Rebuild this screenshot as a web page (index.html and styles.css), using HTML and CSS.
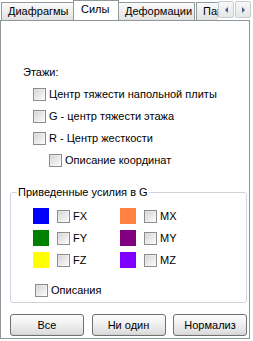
FILE: index.html
```html
<!DOCTYPE html>
<html>
<head>
<meta charset="utf-8">
<link rel="stylesheet" href="styles.css">
</head>
<body>
<div class="tabbar">
  <div class="tabs">
    <div class="tab t1">Диафрагмы</div>
    <div class="tab sel">Силы</div>
    <div class="tab t3">Деформации</div>
    <div class="tab t4">Параметры</div>
  </div>
  <div class="scroll">
    <div class="sbtn"><span class="arr left"></span></div>
    <div class="sbtn"><span class="arr right"></span></div>
  </div>
</div>
<div class="panel">
  <div class="floors">
    <div class="title">Этажи:</div>
    <label class="row ind1"><span class="cb"></span><span class="lbl">Центр тяжести напольной плиты</span></label>
    <label class="row ind1"><span class="cb"></span><span class="lbl">G - центр тяжести этажа</span></label>
    <label class="row ind1"><span class="cb"></span><span class="lbl">R - Центр жесткости</span></label>
    <label class="row ind2"><span class="cb"></span><span class="lbl">Описание координат</span></label>
  </div>
  <fieldset class="group">
    <legend>Приведенные усилия в G</legend>
    <div class="grid">
      <div class="row crow"><span class="sw" style="background:#0000ff"></span><span class="cb"></span><span class="lbl">FX</span></div>
      <div class="row crow"><span class="sw" style="background:#ff8040"></span><span class="cb"></span><span class="lbl">MX</span></div>
      <div class="row crow"><span class="sw" style="background:#008000"></span><span class="cb"></span><span class="lbl">FY</span></div>
      <div class="row crow"><span class="sw" style="background:#800080"></span><span class="cb"></span><span class="lbl">MY</span></div>
      <div class="row crow"><span class="sw" style="background:#ffff00"></span><span class="cb"></span><span class="lbl">FZ</span></div>
      <div class="row crow"><span class="sw" style="background:#8000ff"></span><span class="cb"></span><span class="lbl">MZ</span></div>
    </div>
    <label class="row desc"><span class="cb"></span><span class="lbl">Описания</span></label>
  </fieldset>
  <div class="buttons">
    <button class="btn">Все</button>
    <button class="btn">Ни один</button>
    <button class="btn">Нормализ</button>
  </div>
</div>
</body>
</html>
```
FILE: styles.css
```css
html, body {
  margin: 0;
  padding: 0;
  background: #ffffff;
}
body {
  width: 253px;
  height: 341px;
  overflow: hidden;
  font-family: "Liberation Sans", Arial, sans-serif;
  font-size: 11px;
  line-height: 13px;
  color: #000000;
}
.tabbar {
  display: flex;
  height: 20px;
}
.tabs {
  width: 218px;
  overflow: hidden;
  display: flex;
  align-items: flex-start;
  padding-left: 1px;
  box-sizing: border-box;
}
.tab {
  box-sizing: border-box;
  flex: none;
  height: 18px;
  margin-top: 2px;
  border: 1px solid #919b9c;
  border-bottom: none;
  background: linear-gradient(#fafafa, #ececec 60%, #e2e2e2);
  padding: 2px 0 0 6px;
  white-space: nowrap;
}
.t1 { width: 73px; }
.t3 { width: 77px; margin-left: 0; border-left: none; padding-left: 7px; }
.t4 { width: 60px; margin-left: 1px; }
.tab.sel {
  position: relative;
  z-index: 2;
  height: 21px;
  margin-top: 0;
  width: 46px;
  margin-left: -1px;
  margin-right: -1px;
  background: #ffffff;
  padding: 2px 0 0 7px;
}
.scroll {
  display: flex;
  gap: 1px;
  padding-top: 1px;
}
.sbtn {
  box-sizing: border-box;
  width: 16px;
  height: 17px;
  border: 1px solid #c8cdd2;
  border-radius: 2px;
  background: linear-gradient(#f8f8f8, #e4e6e8);
  display: flex;
  align-items: center;
  justify-content: center;
}
.arr {
  width: 0;
  height: 0;
  border-top: 3px solid transparent;
  border-bottom: 3px solid transparent;
}
.arr.left { border-right: 3px solid #4a5d80; }
.arr.right { border-left: 3px solid #4a5d80; }
.panel {
  box-sizing: border-box;
  width: 250px;
  height: 319px;
  border: 1px solid #8f969b;
  background: #ffffff;
  display: flex;
  flex-direction: column;
}
.floors {
  padding: 45px 0 0 22px;
}
.title {
  height: 13px;
  margin-bottom: 4px;
}
.row {
  display: flex;
  align-items: center;
  height: 22px;
}
.ind1 { margin-left: 10px; }
.ind2 { margin-left: 26px; }
.cb {
  box-sizing: border-box;
  flex: none;
  width: 13px;
  height: 13px;
  border: 1px solid #8c8c8c;
  background: linear-gradient(135deg, #d4d4d4, #f4f4f4 80%, #ffffff);
  box-shadow: inset 0 0 0 1px #ffffff40;
}
.lbl {
  margin-left: 3px;
  white-space: nowrap;
}
.group {
  margin: 15px 2px 0 9px;
  padding: 0 0 1px 0;
  border: 1px solid #d0d4d9;
  border-radius: 3px;
  min-width: 0;
}
.group legend {
  margin-left: 6px;
  padding: 0 1px;
  line-height: 13px;
}
.grid {
  display: grid;
  grid-template-columns: 87px auto;
  padding-left: 22px;
  margin-top: 6px;
}
.sw {
  flex: none;
  width: 16px;
  height: 16px;
  margin-right: 8px;
}
.desc {
  margin-top: 8px;
  margin-left: 24px;
}
.buttons {
  display: flex;
  justify-content: space-between;
  margin: 11px 2px 0 9px;
}
.btn {
  box-sizing: border-box;
  width: 74px;
  height: 22px;
  margin: 0;
  padding: 0;
  border: 1px solid #707070;
  border-radius: 3px;
  background: linear-gradient(#fdfdfd, #f0f0f0 45%, #dedede 90%, #d2d2d2);
  font-family: "Liberation Sans", Arial, sans-serif;
  font-size: 11px;
  line-height: 13px;
  color: #000000;
}
```
